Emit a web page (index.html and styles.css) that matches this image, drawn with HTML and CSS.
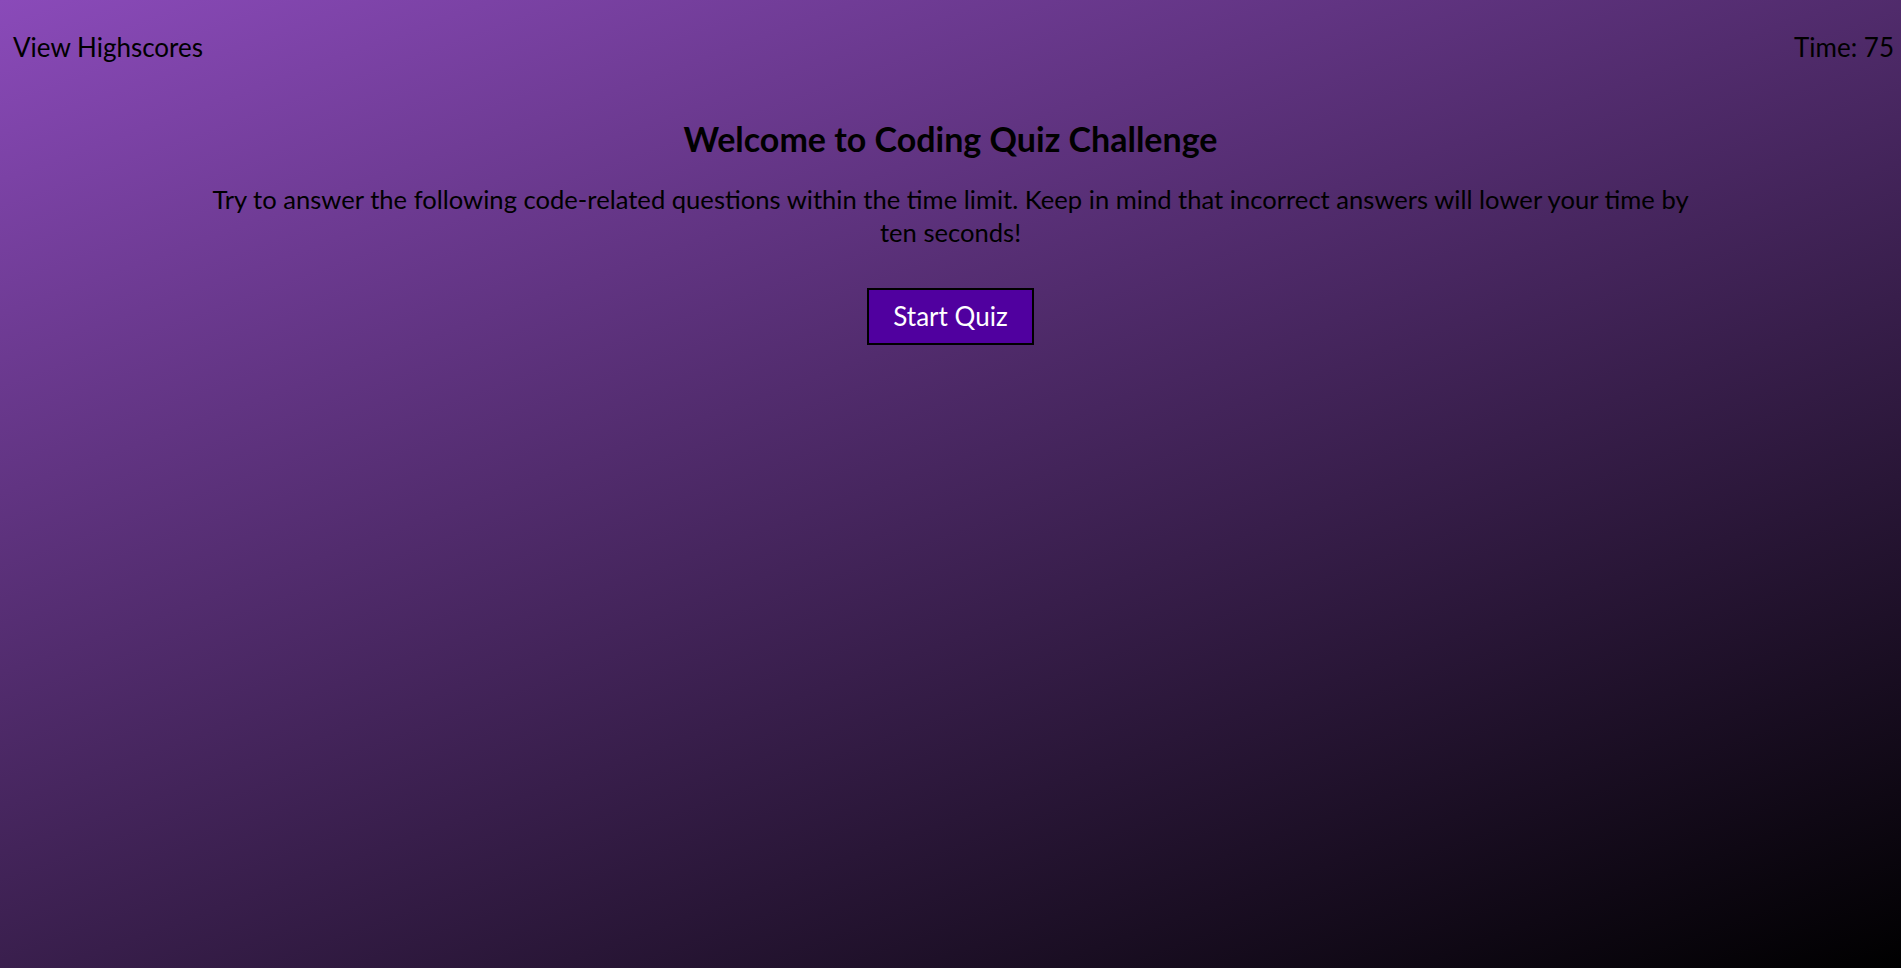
FILE: index.html
```html
<!DOCTYPE html>
<html lang="en">
<head>
<meta charset="utf-8">
<title>Coding Quiz Challenge</title>
<link rel="stylesheet" href="styles.css">
</head>
<body>
  <header class="top-bar">
    <a class="highscores-link" href="#">View Highscores</a>
    <div class="timer">Time: <span class="timer-value">75</span></div>
  </header>
  <main class="intro">
    <h1 class="intro-title">Welcome to Coding Quiz Challenge</h1>
    <p class="intro-text">Try to answer the following code-related questions within the time limit. Keep in mind that incorrect answers will lower your time by ten seconds!</p>
    <button class="start-button" type="button">Start Quiz</button>
  </main>
</body>
</html>
```
FILE: styles.css
```css
html {
  height: 100%;
}

body {
  margin: 0;
  min-height: 100%;
  background: linear-gradient(160deg, #8a4ab9 0%, #000000 100%);
  font-family: "Comic Sans MS", "Lato", sans-serif;
  font-size: 26px;
  line-height: 33px;
  color: #000;
}

.top-bar {
  display: flex;
  justify-content: space-between;
  align-items: center;
  padding: 31px 7px 0 13px;
}

.highscores-link {
  color: #000;
  text-decoration: none;
}

.intro {
  display: flex;
  flex-direction: column;
  align-items: center;
  text-align: center;
}

.intro-title {
  margin: 55px 0 0;
  font-size: 34px;
  line-height: 40px;
  font-weight: bold;
}

.intro-text {
  width: 79%;
  margin: 24px 0 0;
  font-size: 25.6px;
}

.start-button {
  margin-top: 39px;
  padding: 10px 24px;
  font-family: inherit;
  font-size: 26px;
  line-height: 33px;
  color: #fff;
  background: #50009f;
  border: 2px solid #000;
  cursor: pointer;
}
```
